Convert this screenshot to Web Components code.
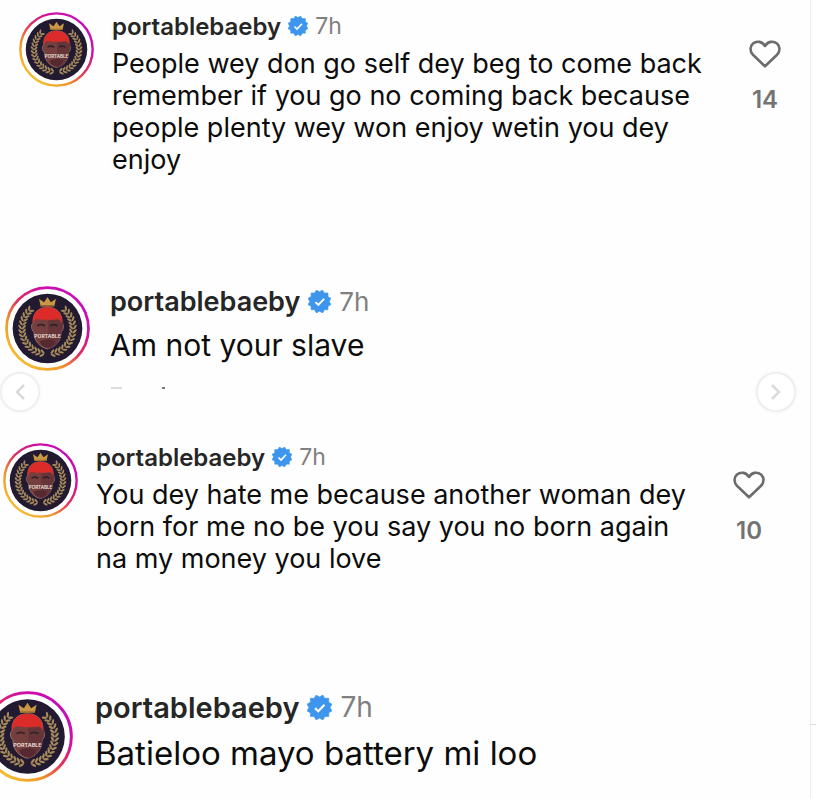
<!DOCTYPE html>
<html lang="en">
<head>
<meta charset="utf-8">
<meta name="viewport" content="width=device-width, initial-scale=1">
<title>Comments</title>
<style>
  body {
    margin: 0;
    background: #fefefe;
    color: #0c0c0c;
    font-family: Inter, "Liberation Sans", sans-serif;
  }
</style>
</head>
<body>
<comment-gallery>
  <user-comment name="portablebaeby" time="7h" likes="14" style="--indent: 19px; --like-gutter: 25px">People wey don go self dey beg to come back remember if you go no coming back because people plenty wey won enjoy wetin you dey enjoy</user-comment>
  <user-comment name="portablebaeby" time="7h" size="medium" cut style="--indent: 5px">Am not your slave</user-comment>
  <user-comment name="portablebaeby" time="7h" likes="10" style="--indent: 3px; --like-gutter: 41px">You dey hate me because another woman dey born for me no be you say you no born again na my money you love</user-comment>
  <user-comment name="portablebaeby" time="7h" size="large" style="--indent: -18px">Batieloo mayo battery mi loo</user-comment>
</comment-gallery>

<script>
class StoryAvatar extends HTMLElement {
  constructor() {
    super();
    this.attachShadow({ mode: 'open' });
    this.shadowRoot.innerHTML = `
      <style>
      :host {
        display: block;
        width: var(--avatar);
        height: var(--avatar);
      }

      svg {
        display: block;
        width: 100%;
        height: 100%;
      }
      </style>
      <svg viewBox="0 0 100 100" role="img" aria-label="Profile picture">
        <defs>
          <linearGradient id="ring" x1="0.1" y1="0.9" x2="0.8" y2="0.1">
            <stop offset="0" stop-color="#f8c22c"/>
            <stop offset="0.3" stop-color="#f0952d"/>
            <stop offset="0.55" stop-color="#e0305e"/>
            <stop offset="0.8" stop-color="#d010a0"/>
            <stop offset="1" stop-color="#c80cb8"/>
          </linearGradient>
          <g id="leaf">
            <ellipse rx="3.2" ry="1.3" transform="translate(-2.2 0) rotate(50)"/>
            <ellipse rx="3.2" ry="1.3" transform="translate(2.2 0) rotate(-50)"/>
          </g>
        </defs>
        <circle cx="50" cy="50" r="48.2" fill="#fff" stroke="url(#ring)" stroke-width="3.2"/>
        <circle cx="50" cy="50" r="41" fill="#211a31"/>
        <g fill="#a5895a">${this.laurel()}</g>
        <path d="M33 44c-1-12 6-19 17-19s18 7 17 19c3 1 2 8-1 10 0 11-7 18-16 20-9-2-16-9-16-20-3-2-4-9-1-10z" fill="#743f3c" stroke="#a78378" stroke-width="0.8"/>
        <path d="M51 40h16c3 1 2 9-1 14 0 10-7 18-15 20z" fill="#663539"/>
        <path d="M33 44c-1-12 6-19 17-19s18 7 17 19c-2-4-4-6-7-5-7 1-13 1-20 0-3-1-5 1-7 5z" fill="#dc2c2a"/>
        <path d="M38 47q4-3 9 0M53 47q4-3 9 0" fill="none" stroke="#33202a" stroke-width="2"/>
        <path d="M41 65q9-5 18 0-1 6-9 8-8-2-9-8z" fill="#55292f"/>
        <path d="M42 24l-2-9 6 4 4-6 4 6 6-4-2 9z" fill="#c99643"/>
        <path d="M42 23h16" stroke="#875a2a" stroke-width="1"/>
        <text x="50" y="61" text-anchor="middle" font-size="6" font-weight="600" fill="#eee1df">PORTABLE</text>
      </svg>
    `;
  }

  // two rows of leaves, open at the crown
  laurel() {
    let leaves = '';
    for (let angle = 12; angle <= 144; angle += 9) {
      for (const side of [-1, 1]) {
        const rad = angle * Math.PI / 180;
        const x = 50 + side * Math.sin(rad) * 30;
        const y = 50 + Math.cos(rad) * 30;
        const turn = side * (90 - angle);
        leaves += `<use href="#leaf" transform="translate(${x.toFixed(1)} ${y.toFixed(1)}) rotate(${turn})"/>`;
      }
    }
    return leaves;
  }
}

class VerifiedBadge extends HTMLElement {
  constructor() {
    super();
    this.attachShadow({ mode: 'open' });
    this.shadowRoot.innerHTML = `
      <style>
      :host {
        display: block;
        width: var(--badge);
        height: var(--badge);
      }

      svg {
        display: block;
        width: 100%;
        height: 100%;
      }
      </style>
      <svg viewBox="0 0 40 40" role="img" aria-label="Verified">
        <path fill="#3d96ec" stroke="#3d96ec" stroke-linejoin="round" d="M20 3.1 14.6 0l-3 5.2H5.4v6.3L0 14.6 3.1 20 0 25.4l5.4 3.1v5.9h6L14.6 40l5.4-3.1 5.4 3.1 3.2-5.6h6.2v-6l5.2-3L36.9 20l3.1-5.4-5.2-3V5.2h-6.5L25.4 0z"/>
        <path fill="none" stroke="#fff" stroke-width="3.4" d="m13 21 5 5 10-10.5"/>
      </svg>
    `;
  }
}

class LikeCounter extends HTMLElement {
  constructor() {
    super();
    this.attachShadow({ mode: 'open' });
    this.shadowRoot.innerHTML = `
      <style>
      :host {
        display: block;
      }

      button {
        display: flex;
        flex-direction: column;
        align-items: center;
        gap: 16px;
        width: 40px;
        margin: 0;
        padding: 0;
        border: none;
        background: none;
        color: #737373;
        font: 600 24px/32px Inter, "Liberation Sans", sans-serif;
        cursor: pointer;
      }

      svg {
        display: block;
        width: 32px;
        height: 28px;
      }
      </style>
      <button type="button" aria-label="Like">
        <svg viewBox="0 0 32 28" fill="none" stroke="#6c6c6c" stroke-width="2.6" stroke-linejoin="round">
          <path d="M16 26.3 4.2 15C.6 11.3.7 6.3 4 3.5 8 .3 13.3 1.5 16 6c2.7-4.5 8-5.7 12-2.5 3.3 2.8 3.4 7.8-.2 11.5z"/>
        </svg>
        <slot></slot>
      </button>
    `;
  }
}

class UserComment extends HTMLElement {
  constructor() {
    super();
    this.attachShadow({ mode: 'open' });
  }

  connectedCallback() {
    const likes = this.getAttribute('likes');
    this.shadowRoot.innerHTML = `
      <style>
      :host {
        --avatar: 75px;
        --badge: 20px;
        --name: 24px;
        --time: 23px;
        --text: 27px;
        --line: 32px;
        --head: 28px;
        --gap: 8px;
        --space: 7px;
        display: flex;
        align-items: flex-start;
        gap: 18px;
        margin-left: var(--indent);
      }

      :host([size="medium"]) {
        --avatar: 85px;
        --badge: 23px;
        --name: 27px;
        --time: 26px;
        --text: 30px;
        --line: 38px;
        --head: 30px;
        --gap: 10px;
        --space: 8px;
        gap: 20px;
      }

      :host([size="large"]) {
        --avatar: 91px;
        --badge: 25px;
        --name: 29px;
        --time: 28px;
        --text: 33px;
        --line: 40px;
        --head: 32px;
        --gap: 10px;
        --space: 8px;
        gap: 22px;
      }

      story-avatar, like-counter {
        flex: none;
      }

      .body {
        flex: 1;
        min-width: 0;
      }

      header {
        display: flex;
        align-items: center;
        gap: var(--space);
        height: var(--head);
        font-size: var(--name);
        margin-bottom: var(--gap);
      }

      a {
        color: #262626;
        font-weight: 600;
        text-decoration: none;
      }

      time {
        color: #808080;
        font-size: var(--time);
      }

      p {
        max-width: 600px;
        margin: 0;
        font-size: var(--text);
        line-height: var(--line);
      }

      .cut {
        display: block;
        margin-top: 22px;
      }

      like-counter {
        margin: 28px var(--like-gutter) 0 0;
      }
      </style>
      <story-avatar></story-avatar>
      <div class="body">
        <header>
          <a href="#">${this.getAttribute('name')}</a>
          <verified-badge></verified-badge>
          <time>${this.getAttribute('time')}</time>
        </header>
        <p><slot></slot></p>
        ${this.hasAttribute('cut') ? `
        <svg class="cut" width="60" height="4" aria-hidden="true">
          <path d="M1 2h11" stroke="#bbb"/>
          <path d="M52 2h3" stroke="#777" stroke-width="2"/>
        </svg>` : ''}
      </div>
      ${likes ? `<like-counter>${likes}</like-counter>` : ''}
    `;
  }
}

class CommentGallery extends HTMLElement {
  constructor() {
    super();
    this.attachShadow({ mode: 'open' });
    this.shadowRoot.innerHTML = `
      <style>
      :host {
        display: flex;
        position: relative;
        min-height: 100vh;
        overflow: hidden;
      }

      main {
        flex: 1;
        min-width: 0;
        padding-top: 12px;
      }

      ::slotted(user-comment:nth-child(2)) {
        margin-top: 110px;
      }

      ::slotted(user-comment:nth-child(3)) {
        margin-top: 53px;
      }

      ::slotted(user-comment:nth-child(4)) {
        margin-top: 116px;
      }

      aside {
        display: flex;
        flex-direction: column;
        width: 6px;
      }

      aside div {
        box-sizing: border-box;
        border-left: 1px solid #ededed;
      }

      aside .post {
        height: 725px;
        border-bottom: 1px solid #dadada;
      }

      aside .rest {
        flex: 1;
      }

      button {
        position: absolute;
        top: 372px;
        display: flex;
        align-items: center;
        justify-content: center;
        width: 40px;
        height: 40px;
        padding: 0;
        border: 2px solid #f0f0f0;
        border-radius: 50%;
        background: #fff;
        box-shadow: 0 0 3px #eee;
        cursor: pointer;
      }

      .previous {
        left: 0;
      }

      .next {
        right: 20px;
      }
      </style>
      <main><slot></slot></main>
      <aside><div class="post"></div><div class="rest"></div></aside>
      <button class="previous" type="button" aria-label="Previous">
        <svg width="12" height="18" viewBox="0 0 12 18" fill="none" stroke="#dadada" stroke-width="2.5"><path d="M10 2 3 9l7 7"/></svg>
      </button>
      <button class="next" type="button" aria-label="Next">
        <svg width="12" height="18" viewBox="0 0 12 18" fill="none" stroke="#dadada" stroke-width="2.5"><path d="m2 2 7 7-7 7"/></svg>
      </button>
    `;
  }
}

customElements.define('story-avatar', StoryAvatar);
customElements.define('verified-badge', VerifiedBadge);
customElements.define('like-counter', LikeCounter);
customElements.define('user-comment', UserComment);
customElements.define('comment-gallery', CommentGallery);
</script>
</body>
</html>
